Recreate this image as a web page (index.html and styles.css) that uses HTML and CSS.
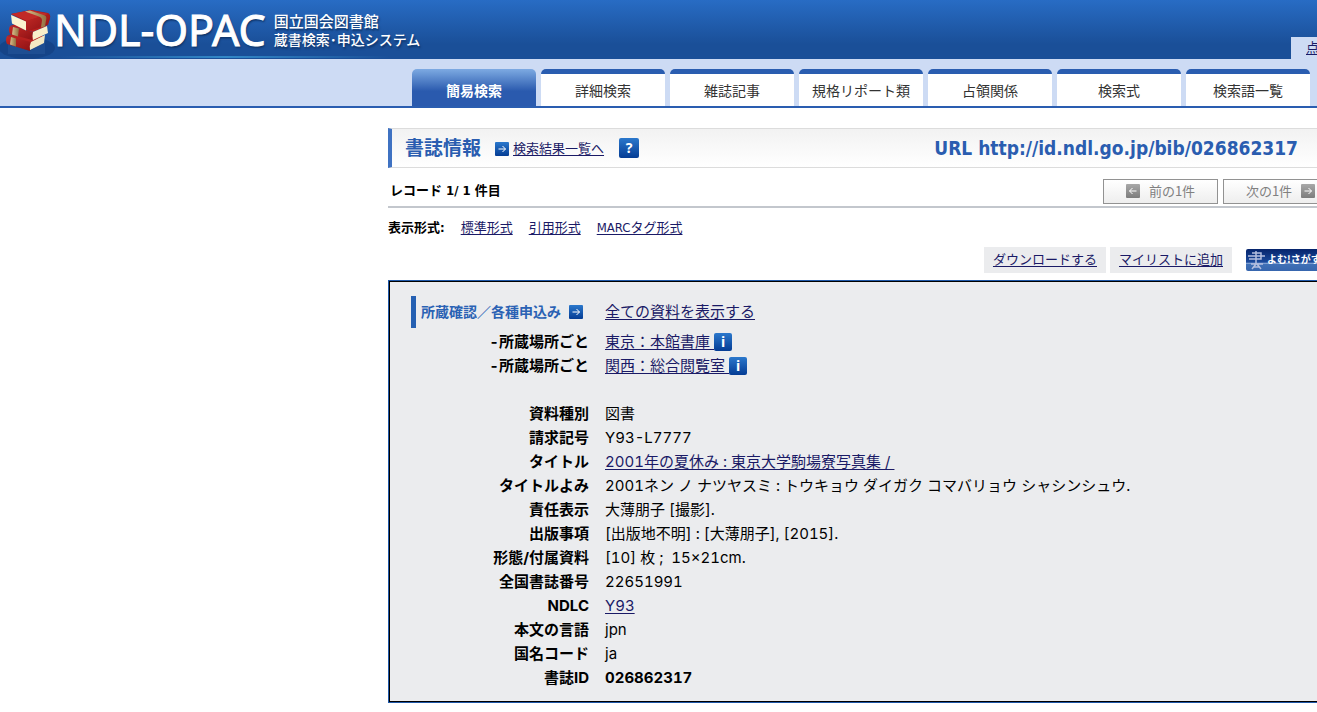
FILE: index.html
```html
<!DOCTYPE html>
<html lang="ja">
<head>
<meta charset="utf-8">
<title>NDL-OPAC 書誌情報</title>
<link rel="stylesheet" href="styles.css">
</head>
<body>
<svg class="defs" aria-hidden="true">
  <defs>
    <linearGradient id="blue" x1="0" y1="0" x2="0" y2="1"><stop offset="0" stop-color="#2b78cc"/><stop offset="1" stop-color="#043c94"/></linearGradient>
    <linearGradient id="gray" x1="0" y1="0" x2="0" y2="1"><stop offset="0" stop-color="#a8a8a8"/><stop offset="1" stop-color="#7d7d7d"/></linearGradient>
    <linearGradient id="red" x1="0" y1="0" x2="1" y2="1"><stop offset="0" stop-color="#c42a26"/><stop offset="1" stop-color="#8d1114"/></linearGradient>
    <linearGradient id="gold" x1="0" y1="0" x2="1" y2="0"><stop offset="0" stop-color="#d8bd8c"/><stop offset="1" stop-color="#92703f"/></linearGradient>
    <symbol id="arrow" viewBox="0 0 14 14"><path d="M3.500 7h7M7.500 4l3 3-3 3" fill="none" stroke="#fff"/></symbol>
  </defs>
</svg>
<header class="header">
  <a class="brand" href="#">
    <svg class="books" viewBox="0 0 58 58" aria-hidden="true">
      <ellipse cx="27" cy="47" rx="28" ry="11" fill="#123f80" opacity=".65"/>
      <path d="M8 43l22 7 15-9v12H8z" fill="#3567aa" opacity=".3"/>
      <path d="M7 35l7-3 30 3-14 7z" fill="#b7201f"/><path d="M7 35l24 6-1 9-23-7q-2-4 0-8z" fill="url(#red)"/>
      <path d="M31 41l14-7-1 8-14 7q-1-4 1-8z" fill="#f3e9c3"/><path d="M11 36l5 1.500v8l-6-2z" fill="url(#gold)"/>
      <path d="M10 25l8-3 29 3-14 6z" fill="#b7201f"/><path d="M10 25l23 6-1 8-22-6q-2-4 0-8z" fill="url(#red)"/>
      <path d="M33 31l14-6 1 7-15 7q-1-4 0-8z" fill="#f8efca"/><path d="M13 26l6 1.500-1 8-6-2z" fill="url(#gold)"/>
      <path d="M11 13l20-4 17 3q3 2 2 5l-2 7-20 6-2-9z" fill="#a91718"/><path d="M11 13l20-4 18 4-22 7z" fill="#c22a27"/>
      <path d="M11 14l15 6.500v9l-14-7z" fill="#fbf4cf"/><path d="M26 20l22-7q3 2 1 7l-2 4-20 6z" fill="url(#red)"/>
      <path d="M25 10.500l5-1 15 5q2 1 1 5l-1 6-4 1 1-7q0-3-3-4z" fill="url(#gold)"/>
    </svg>
    <span class="logo">NDL-OPAC</span>
    <span class="tagline"><span>国立国会図書館</span><span class="system">蔵書検索･申込システム</span></span>
  </a>
  <div class="utility"><a href="#">点</a></div>
</header>
<nav class="tabs">
  <a class="tab current" href="#">簡易検索</a>
  <a class="tab" href="#">詳細検索</a>
  <a class="tab" href="#">雑誌記事</a>
  <a class="tab" href="#">規格リポート類</a>
  <a class="tab" href="#">占領関係</a>
  <a class="tab" href="#">検索式</a>
  <a class="tab" href="#">検索語一覧</a>
</nav>
<main class="main">
  <div class="title-bar">
    <h1>書誌情報</h1>
    <a class="back" href="#"><svg class="icon" viewBox="0 0 14 14" aria-hidden="true"><rect width="14" height="14" rx="1" fill="url(#blue)"/><use href="#arrow"/></svg><span>検索結果一覧へ</span></a>
    <button class="help" type="button">?</button>
    <strong class="url">URL http://id.ndl.go.jp/bib/026862317</strong>
  </div>
  <div class="record-bar">
    <strong>レコード 1/ 1 件目</strong>
    <div class="pager">
      <button type="button"><svg class="icon" viewBox="0 0 14 14" aria-hidden="true"><rect width="14" height="14" rx="1" fill="url(#gray)"/><path d="M10.500 7h-7M6.500 4l-3 3 3 3" fill="none" stroke="#fff"/></svg>前の1件</button>
      <button type="button">次の1件<svg class="icon" viewBox="0 0 14 14" aria-hidden="true"><rect width="14" height="14" rx="1" fill="url(#gray)"/><use href="#arrow"/></svg></button>
    </div>
  </div>
  <div class="formats">
    <strong>表示形式:</strong>
    <a href="#">標準形式</a>
    <a href="#">引用形式</a>
    <a href="#">MARCタグ形式</a>
  </div>
  <div class="actions">
    <a class="action" href="#">ダウンロードする</a>
    <a class="action" href="#">マイリストに追加</a>
    <a class="banner" href="#"><svg viewBox="0 0 20 22" aria-hidden="true"><path d="M5 4h9v6H2M1 7h17M9 2v13M4 15h12M9 15l-4 5M10 15l4 5M7 18h5" fill="none" stroke="#b5bfdf" stroke-width="1.500"/></svg><span>よむ!さがす</span></a>
  </div>
  <section class="record">
    <table>
      <tbody>
        <tr class="lead"><th scope="row"><span class="holdings">所蔵確認／各種申込み<svg class="icon" viewBox="0 0 14 14" aria-hidden="true"><rect width="14" height="14" rx="1" fill="url(#blue)"/><use href="#arrow"/></svg></span></th><td><a href="#">全ての資料を表示する</a></td></tr>
        <tr><th scope="row">-所蔵場所ごと</th><td><span class="place"><a href="#">東京：本館書庫&nbsp;</a><button class="info" type="button">i</button></span></td></tr>
        <tr><th scope="row">-所蔵場所ごと</th><td><span class="place"><a href="#">関西：総合閲覧室&nbsp;</a><button class="info" type="button">i</button></span></td></tr>
        <tr class="spacer"><td colspan="2"></td></tr>
        <tr><th scope="row">資料種別</th><td>図書</td></tr>
        <tr><th scope="row">請求記号</th><td>Y93-L7777</td></tr>
        <tr><th scope="row">タイトル</th><td><a href="#">2001年の夏休み : 東京大学駒場寮写真集 /&nbsp;</a></td></tr>
        <tr><th scope="row">タイトルよみ</th><td>2001ネン ノ ナツヤスミ : トウキョウ ダイガク コマバリョウ シャシンシュウ.</td></tr>
        <tr><th scope="row">責任表示</th><td>大薄朋子 [撮影].</td></tr>
        <tr><th scope="row">出版事項</th><td>[出版地不明] : [大薄朋子], [2015].</td></tr>
        <tr><th scope="row">形態/付属資料</th><td>[10] 枚 ;&nbsp; 15×21cm.</td></tr>
        <tr><th scope="row">全国書誌番号</th><td>22651991</td></tr>
        <tr><th scope="row">NDLC</th><td><a href="#">Y93</a></td></tr>
        <tr><th scope="row">本文の言語</th><td>jpn</td></tr>
        <tr><th scope="row">国名コード</th><td>ja</td></tr>
        <tr><th scope="row">書誌ID</th><td><strong>026862317</strong></td></tr>
      </tbody>
    </table>
  </section>
</main>
</body>
</html>
```
FILE: styles.css
```css
* { box-sizing: border-box; }
html { overflow: hidden; }
body { margin: 0; background: #fff; color: #000; font: 13px/20px "DejaVu Sans Condensed", "Noto Sans CJK JP", sans-serif; }
a { color: #1a1a66; text-underline-offset: 2px; }
button { margin: 0; padding: 0; font-family: inherit; }
.defs { position: absolute; width: 0; height: 0; }
.icon { width: 14px; height: 14px; flex: none; }

.header {
  display: flex; justify-content: space-between; align-items: flex-end; height: 59px;
  background:
    linear-gradient(90deg, transparent, #3388c8 50%, transparent) 60px 56px / 330px 2px no-repeat,
    linear-gradient(#286cc4, #1a4f98 75%);
}
.brand { display: flex; align-items: center; height: 59px; color: #fff; text-decoration: none; text-shadow: 1px 2px 2px #0f3468; }
.books { width: 58px; height: 58px; margin-right: -4px; }
.logo { font: 43px/59px "Noto Sans", sans-serif; -webkit-text-stroke: 1px #fff; }
.tagline { display: flex; flex-direction: column; margin-left: 8px; font: 500 15px/19px "Noto Sans CJK JP", sans-serif; }
.system { font-size: 14px; }
.utility { height: 22px; width: 26px; padding-left: 15px; background: #cddbf4; line-height: 22px; }

.tabs { display: flex; gap: 5px; height: 49px; padding: 10px 0 0 412px; background: #cddbf4; border-bottom: 2px solid #2a5db0; }
.tab {
  flex: 0 0 124px; height: 37px; border-top: 5px solid #2a5db0; border-radius: 5px 5px 0 0; background: #fff;
  color: #333; font: 14px/32px "Noto Sans CJK JP", sans-serif; text-align: center; text-decoration: none;
}
.tab.current { padding-top: 5px; border-top: 0; background: linear-gradient(#7daae2, #2a5aae 60%); color: #fff; font-weight: 700; }

.main { margin: 20px -21px 0 388px; }
.title-bar {
  display: flex; align-items: center; height: 40px; padding: 0 40px 0 13px;
  border: 1px solid #dcdcdc; border-width: 1px 0; border-left: 4px solid #3f72c2;
  background: linear-gradient(#f2f2f2, #fff);
}
h1 { margin: 0; padding-bottom: 3px; color: #2a5db0; font: 700 19px/35px "Noto Sans CJK JP", sans-serif; }
.back { display: flex; align-items: center; gap: 4px; margin-left: 14px; padding-top: 1px; }
.help, .info { border: 0; border-radius: 2px; background: linear-gradient(#2b78cc, #043c94); color: #fff; font: 700 14px/18px "Noto Sans", sans-serif; }
.help { width: 20px; height: 20px; margin-left: 15px; }
.info { width: 18px; height: 18px; }
.url { margin-left: auto; color: #2a5db0; font-size: 19px; }

.record-bar { display: flex; justify-content: space-between; align-items: center; height: 40px; padding: 8px 0 0 2px; border-bottom: 2px solid #c3c7cd; }
.pager { display: flex; gap: 5px; }
.pager button {
  display: flex; align-items: center; justify-content: center; gap: 9px; width: 115px; height: 25px;
  border: 1px solid #929292; background: linear-gradient(#fff, #eee); color: #808080; font: 13px/20px "Noto Sans CJK JP", sans-serif;
}
.formats { display: flex; gap: 16px; padding-top: 10px; }
.actions { display: flex; justify-content: flex-end; align-items: center; gap: 4px; margin-top: 9px; }
.action { padding: 3px 9px; background: #ebecee; }
.banner {
  display: flex; align-items: center; width: 92px; height: 22px; margin-left: 10px; padding-left: 1px; border-radius: 2px; overflow: hidden;
  background: linear-gradient(#06246c, #1b4a9c 60%, #8aa8d8 65%, #3f70b6 70%, #3766ae);
  color: #fff; text-decoration: none; font: 700 10px/16px "Noto Sans CJK JP", sans-serif; white-space: nowrap;
}
.banner svg { width: 20px; height: 22px; flex: none; }
.banner span { padding-bottom: 3px; }

.record { margin-top: 7px; padding: 15px 0 12px 22px; border: 1px solid #1f58a8; box-shadow: inset 0 0 0 1px #000; background: #ebecee; }
table { border-collapse: collapse; font: 15px/22px Inter, "Noto Sans CJK JP", sans-serif; font-variant-numeric: tabular-nums; }
th, td { height: 24px; padding: 0; white-space: nowrap; }
th { width: 178px; text-align: right; }
td { padding-left: 16px; text-align: left; }
.lead th, .lead td { height: 34px; vertical-align: top; line-height: 32px; }
.holdings { display: flex; align-items: center; gap: 8px; height: 32px; padding-left: 5px; border-left: 5px solid #2560b2; color: #2a62b4; font-size: 14px; }
.place { display: flex; align-items: center; }
```
